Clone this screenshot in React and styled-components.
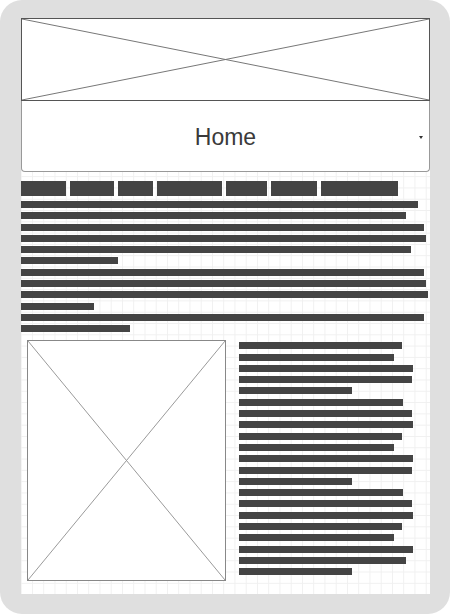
import React from 'react'
import styled, { createGlobalStyle } from 'styled-components'

const GlobalStyle = createGlobalStyle`
  html, body {
    margin: 0;
    padding: 0;
    background: #ffffff;
    font-family: "Liberation Sans", Arial, sans-serif;
  }
`

const navWidths = [45, 44, 35, 65, 41, 46, 77]
const introLines = [397, 385, 403, 405, 390, 97, 403, 405, 407, 73, 403, 109]
const sideLines = [
  163, 155, 174, 173, 113, 164, 173, 174, 163, 155, 174,
  173, 113, 164, 173, 174, 163, 155, 174, 167, 113,
]

const PlaceholderLines = ({ stroke }) => (
  <svg width='100%' height='100%' preserveAspectRatio='none' viewBox='0 0 100 100'>
    <line x1='0' y1='0' x2='100' y2='100' stroke={stroke} strokeWidth='1' vectorEffect='non-scaling-stroke' />
    <line x1='100' y1='0' x2='0' y2='100' stroke={stroke} strokeWidth='1' vectorEffect='non-scaling-stroke' />
  </svg>
)

const App = () => {
  return (
    <>
      <GlobalStyle />
      <Frame>
        <Page>
          <Banner>
            <PlaceholderLines stroke='#777' />
          </Banner>
          <Select>
            <span>Home</span>
            <Caret />
          </Select>
          <Nav>
            {navWidths.map((w, i) => (
              <NavItem key={i} style={{ width: w }} />
            ))}
          </Nav>
          <Lines>
            {introLines.map((w, i) => (
              <Bar key={i} style={{ width: w }} />
            ))}
          </Lines>
          <Split>
            <Picture>
              <PlaceholderLines stroke='#9a9a9a' />
            </Picture>
            <Lines>
              {sideLines.map((w, i) => (
                <Bar key={i} style={{ width: w }} />
              ))}
            </Lines>
          </Split>
        </Page>
      </Frame>
    </>
  )
}

const Frame = styled.div`
  width: 450px;
  height: 614px;
  box-sizing: border-box;
  background: #dfdfdf;
  border-radius: 22px;
  padding: 18px 20px 20px 21px;
`

const Page = styled.main`
  height: 576px;
  display: flex;
  flex-direction: column;
  background-color: #fff;
  background-image:
    linear-gradient(to right, #f0f0f0 1px, transparent 1px),
    linear-gradient(to bottom, #f0f0f0 1px, transparent 1px);
  background-size: 11.25px 11.3px;
  background-position: 11px 0;
`

const Banner = styled.div`
  height: 83px;
  box-sizing: border-box;
  border: 1px solid #555;
  background: #fff;
  svg {
    display: block;
  }
`

const Select = styled.div`
  position: relative;
  height: 71px;
  box-sizing: border-box;
  padding-top: 3px;
  border: 1px solid #999;
  border-top: none;
  border-radius: 0 0 4px 4px;
  background: #fff;
  display: flex;
  align-items: center;
  justify-content: center;
  font-size: 23px;
  color: #3a3a3a;
`

const Caret = styled.i`
  position: absolute;
  right: 6px;
  top: 35px;
  width: 0;
  height: 0;
  border-left: 2px solid transparent;
  border-right: 2px solid transparent;
  border-top: 3px solid #333;
`

const Nav = styled.nav`
  display: flex;
  gap: 4px;
  margin-top: 9px;
`

const NavItem = styled.div`
  height: 15px;
  background: #444;
`

const Lines = styled.div`
  display: flex;
  flex-direction: column;
  gap: 4.3px;
  margin-top: 5px;
`

const Bar = styled.div`
  height: 7px;
  background: #444;
`

const Split = styled.section`
  display: flex;
  align-items: flex-start;
  margin-top: 8px;
  padding-left: 6px;
  gap: 13px;
  ${Lines} {
    margin-top: 2px;
  }
`

const Picture = styled.div`
  width: 199px;
  height: 241px;
  box-sizing: border-box;
  border: 1px solid #888;
  background: #fff;
  svg {
    display: block;
  }
`

export default App
